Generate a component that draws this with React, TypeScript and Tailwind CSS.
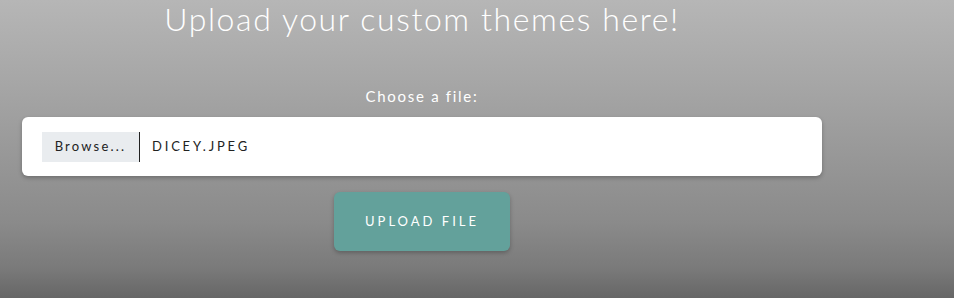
export default function App() {
  return (
    <div
      className="w-[954px] h-[298px] overflow-hidden bg-[linear-gradient(to_bottom,#b6b6b6_0%,#a2a2a2_35%,#8a8a8a_75%,#7a7a7a_90%,#666666_100%)]"
      style={{ fontFamily: "Lato, 'Open Sans', sans-serif" }}
    >
      <div className="w-[800px] ml-[22px] flex flex-col items-center">
        <h1 className="text-[32px] leading-[38px] font-light text-white tracking-[1.6px] mt-0">
          Upload your custom themes here!
        </h1>
        <div className="mt-[49px] text-[15px] leading-[18px] text-white tracking-[1.7px]">Choose a file:</div>
        <div className="mt-[12px] w-full h-[59px] bg-white rounded-[6px] shadow-[0_2px_4px_rgba(0,0,0,0.25)] flex items-center pl-[20px]">
          <div className="h-[30px] w-[98px] bg-[#e9ecef] border-r border-[#222] flex items-center justify-center text-[13px] tracking-[2.2px] text-[#222]">
            Browse...
          </div>
          <div className="ml-[12px] text-[13px] tracking-[2.8px] text-[#222] uppercase">dicey.jpeg</div>
        </div>
        <button className="mt-[16px] w-[176px] h-[59px] bg-[#63a19b] rounded-[6px] shadow-[0_2px_4px_rgba(0,0,0,0.25)] text-white text-[13px] tracking-[3px]">
          UPLOAD FILE
        </button>
      </div>
    </div>
  );
}
